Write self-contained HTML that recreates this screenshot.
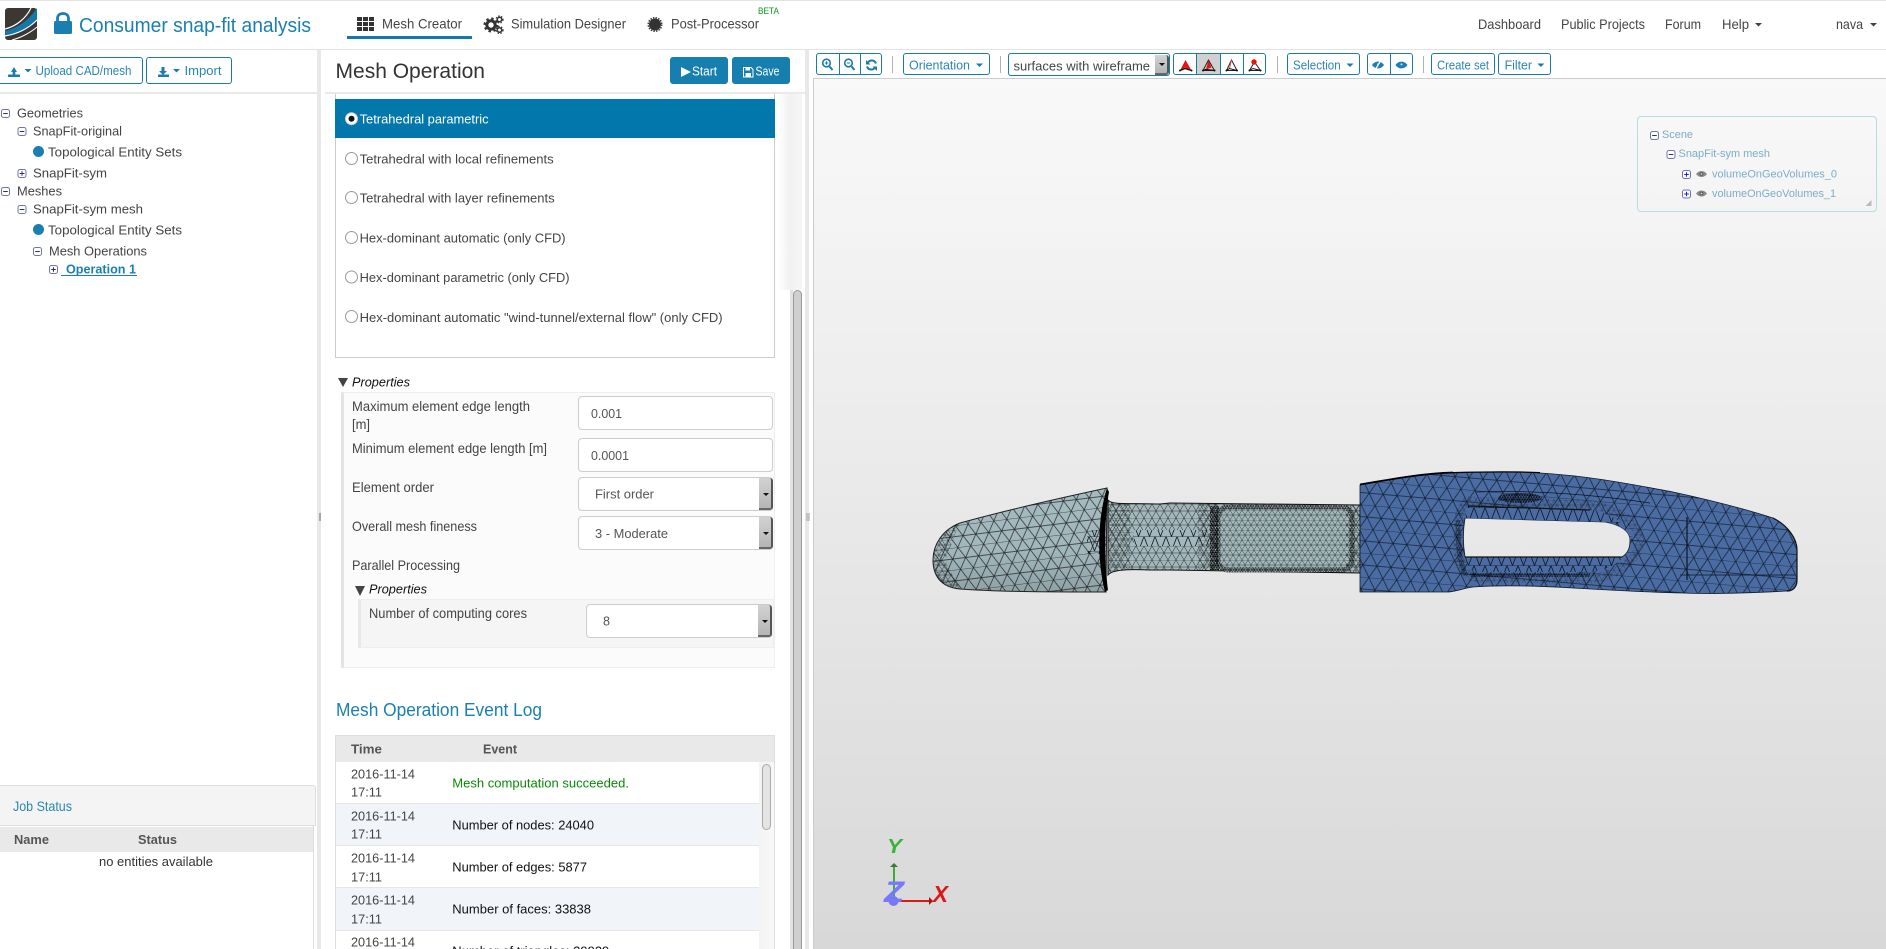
<!DOCTYPE html>
<html lang="en"><head><meta charset="utf-8"><title>Consumer snap-fit analysis</title>
<style>
html,body{margin:0;padding:0;width:1886px;height:949px;overflow:hidden;background:#fff;font-family:"Liberation Sans",sans-serif}
.a{position:absolute;box-sizing:border-box}
.b{position:absolute;box-sizing:border-box;border:1px solid #1a7bab;border-radius:3px;background:#fff}
.i{position:absolute;box-sizing:border-box;border:1px solid #ccc;border-radius:4px;background:#fff}
.ar{position:absolute;box-sizing:border-box;background:linear-gradient(#d2d2d2,#b5b5b5);border-right:2px solid #555;border-bottom:2px solid #666;border-radius:0 3px 3px 0}
svg{position:absolute;left:0;top:0}
text{font-family:"Liberation Sans",sans-serif;white-space:pre}
.t13{font-size:13px;fill:#444}
.n{font-size:14px;fill:#444}
.bl{font-size:13px;fill:#2a86b6}
.w{font-size:13px;fill:#fff}
.sc{font-size:11px;fill:#7badc9}
.rd{font-size:13px;fill:#444}
.lb{font-size:14px;fill:#444}
.ev{font-size:13px;fill:#111}
.th{font-size:13px;font-weight:bold;fill:#555}
</style></head><body>
<!-- navbar -->
<div class="a" style="left:0;top:0;width:1886px;height:50px;background:#fff;border-top:1px solid #e3e3e3;border-bottom:1px solid #e4e4e4"></div>
<div class="a" style="left:347px;top:36px;width:125px;height:3px;background:#1479a8"></div>
<!-- left -->
<div class="a" style="left:0;top:92px;width:317px;height:2px;background:#e8e8e8"></div>
<div class="a" style="left:317px;top:50px;width:4px;height:899px;background:#e8e8e8"></div>
<div class="b" style="left:-4px;top:57px;width:147px;height:27px"></div>
<div class="b" style="left:146px;top:57px;width:86px;height:27px"></div>
<div class="a" style="left:0;top:785px;width:316px;height:41px;background:#f4f4f4;border-top:1px solid #ddd;border-right:1px solid #ddd;border-bottom:1px solid #ddd;border-radius:0 3px 0 0"></div>
<div class="a" style="left:0;top:827px;width:313px;height:25px;background:#e9e9e9"></div>
<div class="a" style="left:313px;top:826px;width:1px;height:123px;background:#ddd"></div>
<!-- middle -->
<div class="a" style="left:325px;top:92px;width:480px;height:2px;background:#eaeaea"></div>
<div class="b" style="left:670px;top:57px;width:58px;height:27px;background:#177fb0;border-color:#177fb0"></div>
<div class="b" style="left:732px;top:57px;width:58px;height:27px;background:#177fb0;border-color:#177fb0"></div>
<div class="a" style="left:335px;top:94px;width:440px;height:264px;border:1px solid #ccc;border-top:0;background:#fff"></div>
<div class="a" style="left:335px;top:99px;width:440px;height:39px;background:#0277ab"></div>
<div class="a" style="left:778px;top:94px;width:24px;height:196px;background:linear-gradient(90deg,#fff,#f1f1f1 50%,#f6f6f6)"></div>
<div class="a" style="left:790px;top:290px;width:3px;height:659px;background:#e2e2e2"></div>
<div class="a" style="left:793px;top:290px;width:9px;height:659px;background:#cfcfcf;border:1px solid #999;border-bottom:0;border-radius:5px 5px 0 0"></div>
<div class="a" style="left:805px;top:50px;width:4px;height:899px;background:#e8e8e8"></div>
<!-- properties -->
<div class="a" style="left:341px;top:392px;width:434px;height:276px;background:#fbfbfb;border:1px solid #eee;border-left:3px solid #e4e4e4"></div>
<div class="i" style="left:578px;top:396px;width:195px;height:34px"></div>
<div class="i" style="left:578px;top:438px;width:195px;height:34px"></div>
<div class="i" style="left:578px;top:477px;width:195px;height:34px"></div><div class="ar" style="left:759px;top:478px;width:14px;height:32px"></div>
<div class="i" style="left:578px;top:516px;width:195px;height:34px"></div><div class="ar" style="left:759px;top:517px;width:14px;height:32px"></div>
<div class="a" style="left:358px;top:599px;width:416px;height:49px;background:#f5f5f5;border:1px solid #eee;border-left:3px solid #e8e8e8"></div>
<div class="i" style="left:586px;top:604px;width:186px;height:34px"></div><div class="ar" style="left:758px;top:605px;width:14px;height:32px"></div>
<!-- table -->
<div class="a" style="left:335px;top:735px;width:440px;height:214px;border:1px solid #ddd;border-bottom:0;background:#fff"></div>
<div class="a" style="left:336px;top:736px;width:438px;height:26px;background:#e9e9e9"></div>
<div class="a" style="left:336px;top:803px;width:423px;height:43px;background:#f1f5fa;border-top:1px solid #e6e6e6;border-bottom:1px solid #e6e6e6"></div>
<div class="a" style="left:336px;top:887px;width:423px;height:44px;background:#f1f5fa;border-top:1px solid #e6e6e6;border-bottom:1px solid #e6e6e6"></div>
<div class="a" style="left:759px;top:762px;width:15px;height:187px;background:linear-gradient(90deg,#f3f3f3,#f8f8f8)"></div>
<div class="a" style="left:762px;top:764px;width:9px;height:66px;background:#e4e4e4;border:1px solid #aaa;border-radius:5px"></div>
<!-- canvas -->
<div class="a" style="left:813px;top:78px;width:1073px;height:871px;background:linear-gradient(#f9f9f9,#d8d8d8);border-left:1px solid #ccc;border-top:1px solid #ccc"></div>
<div class="a" style="left:1637px;top:116px;width:240px;height:96px;border:1px solid #b7dbe8;border-radius:4px"></div>
<!-- toolbar -->
<div class="b" style="left:816px;top:53px;width:66px;height:22px"></div>
<div class="a" style="left:839px;top:53px;width:1px;height:22px;background:#1a7bab"></div>
<div class="a" style="left:860px;top:53px;width:1px;height:22px;background:#1a7bab"></div>
<div class="a" style="left:892px;top:56px;width:1px;height:17px;background:#b9b2b2"></div>
<div class="b" style="left:903px;top:53px;width:87px;height:22px"></div>
<div class="a" style="left:1000px;top:56px;width:1px;height:17px;background:#b9b2b2"></div>
<div class="b" style="left:1008px;top:53px;width:162px;height:23px"></div>
<div class="ar" style="left:1155px;top:55px;width:14px;height:20px"></div>
<div class="b" style="left:1173px;top:53px;width:93px;height:22px"></div>
<div class="a" style="left:1197px;top:54px;width:23px;height:20px;background:#d0d0d0"></div>
<div class="a" style="left:1196px;top:53px;width:1px;height:22px;background:#1a7bab"></div>
<div class="a" style="left:1220px;top:53px;width:1px;height:22px;background:#1a7bab"></div>
<div class="a" style="left:1243px;top:53px;width:1px;height:22px;background:#1a7bab"></div>
<div class="a" style="left:1277px;top:56px;width:1px;height:17px;background:#b9b2b2"></div>
<div class="b" style="left:1287px;top:53px;width:73px;height:22px"></div>
<div class="b" style="left:1367px;top:53px;width:46px;height:22px"></div>
<div class="a" style="left:1390px;top:53px;width:1px;height:22px;background:#1a7bab"></div>
<div class="a" style="left:1423px;top:56px;width:1px;height:17px;background:#b9b2b2"></div>
<div class="b" style="left:1431px;top:53px;width:64px;height:22px"></div>
<div class="b" style="left:1498px;top:53px;width:53px;height:22px"></div>

<svg width="1886" height="949" viewBox="0 0 1886 949" xmlns="http://www.w3.org/2000/svg">
<defs>
<g id="mi"><rect x=".5" y=".5" width="8" height="8" rx="2" fill="#fff" stroke="#6f74b8"/><path d="M2.2 4.5H6.8" stroke="#334" /></g>
<g id="pl"><rect x=".5" y=".5" width="8" height="8" rx="2" fill="#fff" stroke="#6f74b8"/><path d="M2.2 4.5H6.8M4.5 2.2V6.8" stroke="#22c"/></g>
<g id="eye"><path d="M0 4C3 0 8 0 11 4C8 8 3 8 0 4Z" fill="#8a8a8a"/><circle cx="5.5" cy="4" r="2" fill="#666"/><circle cx="5.5" cy="4" r=".8" fill="#ddd"/></g>
<g id="eb"><path d="M0 4C3 -.5 9 -.5 12 4C9 8.500 3 8.500 0 4Z" fill="#1a7fb0"/><circle cx="6" cy="3.400" r="1" fill="#cfe6f2"/></g>
<path id="car" d="M0 0H7L3.5 3.5Z"/>
<pattern id="t1" patternUnits="userSpaceOnUse" width="13" height="22" patternTransform="rotate(-7)"><path d="M0 0H13M0 11H13M0 0L6.500 11L13 0M0 22L6.500 11L13 22" fill="none" stroke="#111" stroke-width=".7" opacity=".85"/></pattern>
<pattern id="t2" patternUnits="userSpaceOnUse" width="8" height="14"><path d="M0 0H8M0 7H8M0 0L4 7L8 0M0 14L4 7L8 14" fill="none" stroke="#111" stroke-width=".55" opacity=".8"/></pattern>
<pattern id="t3" patternUnits="userSpaceOnUse" width="6" height="10"><path d="M0 0H6M0 5H6M0 0L3 5L6 0M0 10L3 5L6 10" fill="none" stroke="#111" stroke-width=".5" opacity=".75"/></pattern>
<pattern id="t4" patternUnits="userSpaceOnUse" width="2.6" height="4.4"><path d="M0 0H2.6M0 2.2H2.6M0 0L1.3 2.2L2.6 0M0 4.4L1.3 2.2L2.6 4.4" fill="none" stroke="#000" stroke-width=".5"/></pattern>
<pattern id="b1" patternUnits="userSpaceOnUse" width="14" height="24" patternTransform="rotate(5)"><path d="M0 0H14M0 12H14M0 0L7 12L14 0M0 24L7 12L14 24" fill="none" stroke="#0c1522" stroke-width=".75" opacity=".85"/></pattern>
<pattern id="b2" patternUnits="userSpaceOnUse" width="11" height="14.5"><path d="M0 0L5.5 14.5L11 0M0 0H11" fill="none" stroke="#0c1522" stroke-width=".8"/></pattern>
<linearGradient id="gc" x1="0" y1="0" x2="0" y2="1"><stop offset="0" stop-color="#a5bbc0"/><stop offset=".6" stop-color="#a2b7bc"/><stop offset="1" stop-color="#8fa3a7"/></linearGradient>
</defs>

<!-- logo -->
<rect x="5" y="8" width="32" height="32" rx="3" fill="#3c3733"/>
<path d="M5 31C18 28 29 20 37 8L37 20C28 29 17 34 5 36Z" fill="#1379ab"/>
<path d="M5 29C17 26 26 18 31 8" fill="none" stroke="#fff" stroke-width="1.2"/>
<path d="M5 36C17 34 28 29 37 20" fill="none" stroke="#fff" stroke-width="1.2"/>
<path d="M12 40C20 38 30 33 37 27" fill="none" stroke="#fff" stroke-width="1"/>
<!-- lock -->
<rect x="54" y="21" width="18" height="13" rx="1.5" fill="#1a7fb0"/>
<path d="M57.5 22V18.5C57.5 15 60 13.5 63 13.5C66 13.5 68.500 15 68.500 18.500V22" fill="none" stroke="#1a7fb0" stroke-width="2.800"/>
<text x="79" y="32" font-size="20" fill="#1a80b0" textLength="232" lengthAdjust="spacingAndGlyphs">Consumer snap-fit analysis</text>
<!-- nav icons -->
<g fill="#333"><rect x="357" y="17" width="5" height="4"/><rect x="363" y="17" width="5" height="4"/><rect x="369" y="17" width="5" height="4"/><rect x="357" y="22" width="5" height="4"/><rect x="363" y="22" width="5" height="4"/><rect x="369" y="22" width="5" height="4"/><rect x="357" y="27" width="5" height="4"/><rect x="363" y="27" width="5" height="4"/><rect x="369" y="27" width="5" height="4"/></g>
<text x="382" y="28.500" class="n" textLength="80" lengthAdjust="spacingAndGlyphs">Mesh Creator</text>
<g fill="none" stroke="#333"><circle cx="491" cy="25" r="4.200" stroke-width="3"/><circle cx="491" cy="25" r="6.500" stroke-width="2" stroke-dasharray="2.500 2.600"/><circle cx="499.500" cy="19.500" r="2.200" stroke-width="1.500"/><circle cx="499.500" cy="19.500" r="3.500" stroke-width="1.200" stroke-dasharray="1.500 1.500"/><circle cx="499.500" cy="30" r="2.200" stroke-width="1.500"/><circle cx="499.500" cy="30" r="3.500" stroke-width="1.200" stroke-dasharray="1.500 1.500"/></g>
<text x="511" y="28.500" class="n" textLength="115" lengthAdjust="spacingAndGlyphs">Simulation Designer</text>
<circle cx="655" cy="24.500" r="6" fill="#333"/><circle cx="655" cy="24.500" r="6.800" fill="none" stroke="#333" stroke-width="1.400" stroke-dasharray="1.500 1.200"/>
<text x="671" y="28.500" class="n" textLength="88" lengthAdjust="spacingAndGlyphs">Post-Processor</text>
<text x="758" y="14" font-size="9" fill="#0a9a20" textLength="21" lengthAdjust="spacingAndGlyphs">BETA</text>
<text x="1478" y="29" class="n" textLength="63" lengthAdjust="spacingAndGlyphs">Dashboard</text>
<text x="1561" y="29" class="n" textLength="84" lengthAdjust="spacingAndGlyphs">Public Projects</text>
<text x="1665" y="29" class="n" textLength="36" lengthAdjust="spacingAndGlyphs">Forum</text>
<text x="1722" y="29" class="n" textLength="27" lengthAdjust="spacingAndGlyphs">Help</text>
<use href="#car" x="1755" y="23" fill="#444"/>
<text x="1836" y="29" class="n" textLength="27" lengthAdjust="spacingAndGlyphs">nava</text>
<use href="#car" x="1870" y="23" fill="#444"/>

<!-- left buttons -->
<g fill="#1a7fb0"><path d="M11 72L14 67L17 72H15.300V75H12.700V72Z"/><rect x="8" y="74.500" width="12" height="2.500" rx=".5"/><use href="#car" x="24.500" y="69"/>
<path d="M161.500 67H164.500V71H167L163 75L159 71H161.500Z"/><rect x="158" y="74.500" width="11" height="2.500" rx=".5"/><use href="#car" x="173" y="69"/></g>
<text x="35.500" y="75" class="bl" textLength="96" lengthAdjust="spacingAndGlyphs">Upload CAD/mesh</text>
<text x="184.500" y="75" class="bl" textLength="37" lengthAdjust="spacingAndGlyphs">Import</text>
<!-- tree -->
<use href="#mi" x="1" y="109"/><text x="17" y="117.500" class="t13" textLength="66" lengthAdjust="spacingAndGlyphs">Geometries</text>
<use href="#mi" x="17.500" y="127"/><text x="33" y="135.500" class="t13" textLength="89" lengthAdjust="spacingAndGlyphs">SnapFit-original</text>
<circle cx="38.500" cy="151.500" r="5.500" fill="#1a7fb0"/><text x="48" y="156.500" class="t13" textLength="134" lengthAdjust="spacingAndGlyphs">Topological Entity Sets</text>
<use href="#pl" x="17.500" y="169"/><text x="33" y="177.500" class="t13" textLength="74" lengthAdjust="spacingAndGlyphs">SnapFit-sym</text>
<use href="#mi" x="1" y="187"/><text x="17" y="195.500" class="t13" textLength="45" lengthAdjust="spacingAndGlyphs">Meshes</text>
<use href="#mi" x="17.500" y="205"/><text x="33" y="213.500" class="t13" textLength="110" lengthAdjust="spacingAndGlyphs">SnapFit-sym mesh</text>
<circle cx="38.500" cy="229.500" r="5.500" fill="#1a7fb0"/><text x="48" y="234.500" class="t13" textLength="134" lengthAdjust="spacingAndGlyphs">Topological Entity Sets</text>
<use href="#mi" x="33" y="247"/><text x="49" y="255.500" class="t13" textLength="98" lengthAdjust="spacingAndGlyphs">Mesh Operations</text>
<use href="#pl" x="49" y="265"/><text x="66" y="273.500" font-size="13" font-weight="bold" fill="#1a80b0" textLength="70" lengthAdjust="spacingAndGlyphs">Operation 1</text>
<rect x="61" y="275" width="76" height="1" fill="#1a80b0"/>
<!-- job status -->
<text x="13" y="811" font-size="14" fill="#2a86b6" textLength="59" lengthAdjust="spacingAndGlyphs">Job Status</text>
<text x="14" y="844" class="th" textLength="35" lengthAdjust="spacingAndGlyphs">Name</text>
<text x="138" y="844" class="th" textLength="39" lengthAdjust="spacingAndGlyphs">Status</text>
<text x="99" y="866" font-size="13" fill="#333" textLength="114" lengthAdjust="spacingAndGlyphs">no entities available</text>
<path d="M320 513V521" stroke="#666"/>

<!-- middle header -->
<text x="335.500" y="78" font-size="21" fill="#333" textLength="149.500" lengthAdjust="spacingAndGlyphs">Mesh Operation</text>
<path d="M681 67L691 72L681 77Z" fill="#fff"/>
<text x="692" y="75.500" class="w" textLength="25" lengthAdjust="spacingAndGlyphs">Start</text>
<path d="M743.500 67.500H751L753 69.500V77H743.500Z" fill="none" stroke="#fff"/><rect x="745.500" y="67.500" width="4.500" height="3" fill="#fff"/><rect x="745.500" y="73" width="5.500" height="4" fill="#fff"/>
<text x="755.500" y="75.500" class="w" textLength="24" lengthAdjust="spacingAndGlyphs">Save</text>
<!-- radios -->
<g fill="#fff" stroke="#999"><circle cx="351.500" cy="118.700" r="6" stroke="#ccc"/><circle cx="351.500" cy="158.500" r="6"/><circle cx="351.500" cy="197.500" r="6"/><circle cx="351.500" cy="237.500" r="6"/><circle cx="351.500" cy="277" r="6"/><circle cx="351.500" cy="316.500" r="6"/></g>
<circle cx="351.500" cy="118.700" r="3" fill="#111"/>
<text x="359.600" y="123.500" font-size="13" fill="#fff" textLength="129" lengthAdjust="spacingAndGlyphs">Tetrahedral parametric</text>
<text x="359.600" y="163.500" class="rd" textLength="194" lengthAdjust="spacingAndGlyphs">Tetrahedral with local refinements</text>
<text x="359.600" y="202.500" class="rd" textLength="195" lengthAdjust="spacingAndGlyphs">Tetrahedral with layer refinements</text>
<text x="359.600" y="242.500" class="rd" textLength="206" lengthAdjust="spacingAndGlyphs">Hex-dominant automatic (only CFD)</text>
<text x="359.600" y="282" class="rd" textLength="210" lengthAdjust="spacingAndGlyphs">Hex-dominant parametric (only CFD)</text>
<text x="359.600" y="322" class="rd" textLength="363" lengthAdjust="spacingAndGlyphs">Hex-dominant automatic "wind-tunnel/external flow" (only CFD)</text>
<!-- properties -->
<path d="M338 378H348L343 387Z" fill="#444"/>
<text x="352" y="386.500" font-size="13" font-style="italic" fill="#111" textLength="58" lengthAdjust="spacingAndGlyphs">Properties</text>
<text x="352" y="411" class="lb" textLength="178" lengthAdjust="spacingAndGlyphs">Maximum element edge length</text>
<text x="352" y="429" class="lb" textLength="18" lengthAdjust="spacingAndGlyphs">[m]</text>
<text x="352" y="453" class="lb" textLength="195" lengthAdjust="spacingAndGlyphs">Minimum element edge length [m]</text>
<text x="352" y="492" class="lb" textLength="82" lengthAdjust="spacingAndGlyphs">Element order</text>
<text x="352" y="531" class="lb" textLength="125" lengthAdjust="spacingAndGlyphs">Overall mesh fineness</text>
<text x="352" y="570" class="lb" textLength="108" lengthAdjust="spacingAndGlyphs">Parallel Processing</text>
<text x="591" y="418" font-size="13" fill="#555" textLength="31" lengthAdjust="spacingAndGlyphs">0.001</text>
<text x="591" y="460" font-size="13" fill="#555" textLength="38" lengthAdjust="spacingAndGlyphs">0.0001</text>
<text x="595" y="498.500" font-size="13" fill="#555" textLength="59" lengthAdjust="spacingAndGlyphs">First order</text>
<text x="595" y="538" font-size="13" fill="#555" textLength="73" lengthAdjust="spacingAndGlyphs">3 - Moderate</text>
<text x="603" y="625.500" font-size="13" fill="#555" textLength="7" lengthAdjust="spacingAndGlyphs">8</text>
<path d="M763 493H769L766 496ZM763 532H769L766 535ZM762 620H768L765 623Z" fill="#111"/>
<path d="M355 586H365L360 596Z" fill="#444"/>
<text x="369" y="593.500" font-size="13" font-style="italic" fill="#111" textLength="58" lengthAdjust="spacingAndGlyphs">Properties</text>
<text x="369" y="618" class="lb" textLength="158" lengthAdjust="spacingAndGlyphs">Number of computing cores</text>
<path d="M807 513V521M809 513V521" stroke="#888" stroke-width=".8"/>
<!-- log -->
<text x="336" y="716" font-size="18" fill="#1a80b0" textLength="206" lengthAdjust="spacingAndGlyphs">Mesh Operation Event Log</text>
<text x="351" y="753.500" class="th" textLength="31" lengthAdjust="spacingAndGlyphs">Time</text>
<text x="483" y="753.500" class="th" textLength="34" lengthAdjust="spacingAndGlyphs">Event</text>
<g class="t13">
<text x="351" y="778.500" class="t13" textLength="64" lengthAdjust="spacingAndGlyphs">2016-11-14</text><text x="351" y="796.500" class="t13" textLength="31" lengthAdjust="spacingAndGlyphs">17:11</text>
<text x="351" y="820.500" class="t13" textLength="64" lengthAdjust="spacingAndGlyphs">2016-11-14</text><text x="351" y="838.500" class="t13" textLength="31" lengthAdjust="spacingAndGlyphs">17:11</text>
<text x="351" y="862.500" class="t13" textLength="64" lengthAdjust="spacingAndGlyphs">2016-11-14</text><text x="351" y="881.500" class="t13" textLength="31" lengthAdjust="spacingAndGlyphs">17:11</text>
<text x="351" y="904.500" class="t13" textLength="64" lengthAdjust="spacingAndGlyphs">2016-11-14</text><text x="351" y="923.500" class="t13" textLength="31" lengthAdjust="spacingAndGlyphs">17:11</text>
<text x="351" y="946.500" class="t13" textLength="64" lengthAdjust="spacingAndGlyphs">2016-11-14</text>
</g>
<text x="452.300" y="787.500" font-size="13" fill="#0a8a0a" textLength="176.700" lengthAdjust="spacingAndGlyphs">Mesh computation succeeded.</text>
<text x="452.300" y="829.500" class="ev" textLength="141.700" lengthAdjust="spacingAndGlyphs">Number of nodes: 24040</text>
<text x="452.300" y="871.500" class="ev" textLength="134.700" lengthAdjust="spacingAndGlyphs">Number of edges: 5877</text>
<text x="452.300" y="913.500" class="ev" textLength="138.700" lengthAdjust="spacingAndGlyphs">Number of faces: 33838</text>
<text x="452.300" y="955.500" class="ev" textLength="157" lengthAdjust="spacingAndGlyphs">Number of triangles: 39939</text>

<!-- toolbar icons -->
<g fill="none" stroke="#1a7bab"><circle cx="826.500" cy="63" r="3.800" stroke-width="1.600"/><path d="M829.500 66.500L832.500 70" stroke-width="2"/><path d="M824.800 63H828.200M826.500 61.300V64.700" stroke-width="1"/>
<circle cx="848.500" cy="63" r="3.800" stroke-width="1.600"/><path d="M851.500 66.500L854.500 70" stroke-width="2"/><path d="M846.800 63H850.200" stroke-width="1"/>
<path d="M876 63.500A4.500 4.500 0 0 0 868 62.500M867 66.500A4.500 4.500 0 0 0 875 67.500" stroke-width="2"/></g>
<path d="M866 60V64.500H870.500ZM877 71V66.500H872.500Z" fill="#1a7bab"/>
<text x="909" y="69.500" class="bl" textLength="61" lengthAdjust="spacingAndGlyphs">Orientation</text><use href="#car" x="976" y="63.500" fill="#1a7bab"/>
<text x="1013.500" y="70.500" font-size="13" fill="#444" textLength="136.500" lengthAdjust="spacingAndGlyphs">surfaces with wireframe</text>
<path d="M1159 63H1165L1162 66Z" fill="#111"/>
<!-- tetrahedra -->
<path d="M1185.500 60L1180 70.500L1185 67.500L1191.500 70.500Z" fill="#ee1010"/><path d="M1180 70.500L1185 68.500L1191.500 70.500" fill="none" stroke="#111" stroke-width="1.300"/>
<path d="M1208.500 60L1203 70.500H1214.500Z" fill="#d0d0d0" stroke="#222"/><path d="M1208.500 60L1206 69.500L1211.500 67.500Z" fill="#e01515"/><path d="M1203 70.500L1206 69.500L1214.500 70.500" fill="none" stroke="#111" stroke-width="1.200"/>
<path d="M1231.500 60L1226.500 70.500H1237Z" fill="#fff" stroke="#222"/><path d="M1231.500 60L1229.500 68.500" stroke="#d55" fill="none"/><path d="M1226.500 70.500L1229.500 68.500L1237 70.500" fill="none" stroke="#111"/>
<path d="M1254.500 62L1249.500 70.500H1260.500Z" fill="#fff" stroke="#222"/><path d="M1249.500 70.500L1253 68.500L1260.500 70.500" fill="none" stroke="#111"/>
<circle cx="1254" cy="62" r="2.700" fill="#ee1010"/>
<g fill="#111"><circle cx="1180" cy="70.500" r="1"/><circle cx="1191.500" cy="70.500" r="1"/><circle cx="1203" cy="70.500" r="1"/><circle cx="1214.500" cy="70.500" r="1"/><circle cx="1226.500" cy="70.500" r="1"/><circle cx="1237" cy="70.500" r="1"/><circle cx="1249.500" cy="70.500" r="1"/><circle cx="1260.500" cy="70.500" r="1"/></g>
<text x="1293" y="69.500" class="bl" textLength="47.700" lengthAdjust="spacingAndGlyphs">Selection</text><use href="#car" x="1346.500" y="63.500" fill="#1a7bab"/>
<use href="#eb" x="1372" y="61"/><path d="M1375.500 69.500L1381 60" stroke="#fff" stroke-width="1.300"/>
<use href="#eb" x="1395.500" y="61"/>
<text x="1437" y="69.500" class="bl" textLength="52" lengthAdjust="spacingAndGlyphs">Create set</text>
<text x="1504.600" y="69.500" class="bl" textLength="27.400" lengthAdjust="spacingAndGlyphs">Filter</text><use href="#car" x="1537.400" y="63.500" fill="#1a7bab"/>

<!-- scene tree -->
<use href="#mi" x="1650" y="131"/><text x="1662" y="138" class="sc" textLength="31" lengthAdjust="spacingAndGlyphs">Scene</text>
<use href="#mi" x="1666.500" y="150"/><text x="1678.500" y="157" class="sc" textLength="91.500" lengthAdjust="spacingAndGlyphs">SnapFit-sym mesh</text>
<use href="#pl" x="1682" y="170"/><use href="#eye" x="1696" y="170"/><text x="1712" y="177.500" class="sc" textLength="125" lengthAdjust="spacingAndGlyphs">volumeOnGeoVolumes_0</text>
<use href="#pl" x="1682" y="189.500"/><use href="#eye" x="1696" y="189.500"/><text x="1712" y="197" class="sc" textLength="124" lengthAdjust="spacingAndGlyphs">volumeOnGeoVolumes_1</text>
<path d="M1871.500 200V206H1865.500Z" fill="#bbb"/>

<!-- model: neck -->
<path d="M1108 500C1112 505 1125 503 1160 504L1170 503L1360 505V573L1170 570H1150C1125 569 1112 570 1108 575Z" fill="#a3b8bc"/>
<path d="M1108 500C1112 505 1125 503 1160 504L1170 503L1360 505V573L1170 570H1150C1125 569 1112 570 1108 575Z" fill="url(#t2)" stroke="#111" stroke-width="1"/>
<path d="M1108 500C1112 505 1120 503 1130 504L1130 570C1120 569 1112 570 1108 575Z" fill="url(#t3)"/>
<rect x="1134" y="530" width="76" height="16" fill="#a3b8bc"/><rect x="1134" y="530" width="76" height="16" fill="url(#b2)"/>
<rect x="1198" y="504" width="20" height="66" fill="url(#t3)"/>
<rect x="1210" y="506" width="9" height="64" fill="url(#t4)"/>
<rect x="1218" y="505" width="134" height="67" rx="10" fill="#a3b8bc"/>
<rect x="1218" y="505" width="134" height="67" rx="10" fill="url(#t3)"/>
<rect x="1218" y="507" width="134" height="63" rx="10" fill="none" stroke="url(#t4)" stroke-width="5" opacity=".8"/>
<rect x="1346" y="505" width="14" height="68" fill="url(#t3)"/>
<!-- model: cap -->
<path d="M1107 488C1060 498 1000 512 960 523C942 530 933 545 933 560C933 575 940 587 960 589C1000 592 1060 592 1106 592Z" fill="url(#gc)"/>
<path d="M1107 488C1060 498 1000 512 960 523C942 530 933 545 933 560C933 575 940 587 960 589C1000 592 1060 592 1106 592Z" fill="url(#t1)" stroke="#222" stroke-width="1"/>
<path d="M960 523C942 530 933 545 933 560C933 575 940 587 960 589L945 560Z" fill="url(#t3)"/>
<path d="M1087 530H1100V554H1087Z" fill="url(#b2)"/>
<path d="M1107 488L1109 492C1104 520 1104 560 1108 590L1105 592C1097 560 1097 520 1107 488Z" fill="#000"/>
<!-- model: blue body -->
<path fill-rule="evenodd" d="M1360 485C1390 480 1420 474 1453 473C1490 472 1520 472 1540 473C1590 476 1630 484 1673 492C1710 500 1745 509 1773 518C1787 525 1797 538 1797 550V580C1797 588 1792 591 1787 591C1750 593 1710 594 1683 593C1640 592 1610 590 1573 588C1540 586 1500 585 1473 587C1460 589 1455 592 1447 592H1360ZM1465 518L1605 522C1622 525 1630 532 1630 540C1630 548 1628 553 1622 557H1465C1463 545 1463 530 1465 518Z" fill="#4a6ca3"/>
<path fill-rule="evenodd" d="M1360 485C1390 480 1420 474 1453 473C1490 472 1520 472 1540 473C1590 476 1630 484 1673 492C1710 500 1745 509 1773 518C1787 525 1797 538 1797 550V580C1797 588 1792 591 1787 591C1750 593 1710 594 1683 593C1640 592 1610 590 1573 588C1540 586 1500 585 1473 587C1460 589 1455 592 1447 592H1360ZM1465 518L1605 522C1622 525 1630 532 1630 540C1630 548 1628 553 1622 557H1465C1463 545 1463 530 1465 518Z" fill="url(#b1)" stroke="#10192a" stroke-width=".8"/>
<path d="M1468 501L1590 505C1620 509 1640 525 1640 540C1640 562 1612 577 1590 579L1475 578C1462 575 1458 560 1458 540C1458 520 1460 505 1468 501Z" fill="none" stroke="url(#t3)" stroke-width="9" opacity=".7"/>
<path d="M1458 520C1458 540 1458 560 1466 575" fill="none" stroke="url(#t4)" stroke-width="5" opacity=".6"/>
<path d="M1470 575H1590" fill="none" stroke="url(#t4)" stroke-width="4" opacity=".7"/>
<path d="M1468 506L1590 510C1612 513 1628 525 1632 538L1630 540C1630 532 1622 525 1605 522L1465 518Z" fill="#4a6ca3"/>
<path d="M1468 506L1590 510C1612 513 1628 525 1632 538L1630 540C1630 532 1622 525 1605 522L1465 518Z" fill="url(#b2)"/>
<path d="M1465 557H1622C1618 566 1600 571 1590 572L1478 572C1470 570 1467 565 1465 557Z" fill="#4a6ca3"/>
<path d="M1465 557H1622C1618 566 1600 571 1590 572L1478 572C1470 570 1467 565 1465 557Z" fill="url(#b2)"/>
<path d="M1465 557H1622M1468 506L1590 510" stroke="#111" stroke-width="1.200" fill="none"/>
<ellipse cx="1520" cy="498" rx="22" ry="5" fill="url(#t4)"/>
<path d="M1475 492C1530 490 1590 494 1650 503" fill="none" stroke="#0c1522" stroke-width=".8"/>
<path d="M1687 517V580" stroke="#0c1522" stroke-width="1.200"/>
<path d="M1680 575H1795" stroke="#0c1522" stroke-width=".8"/>
<path d="M1360 484.500C1390 479.500 1420 473.500 1453 472.500" fill="none" stroke="#000" stroke-width="1.800"/>
<path d="M1453 472.500C1490 471.500 1520 471.500 1540 472.500" fill="none" stroke="#000" stroke-width=".9"/>
<path d="M1773 518C1787 525 1797 538 1797 550V580C1797 588 1792 591 1787 591" fill="none" stroke="#111" stroke-width="1.200"/>

<!-- axes -->
<path d="M894 900V866" stroke="#3cab3c" stroke-width="2"/><path d="M890 867L894 863L898 867Z" fill="#3a7a3a"/>
<path d="M893 901H930" stroke="#e01515" stroke-width="2"/><path d="M929 897V905L933 901Z" fill="#a11"/>
<circle cx="893.500" cy="901" r="5" fill="#7777ee"/>
<text x="887" y="853" font-size="20" font-weight="bold" font-style="italic" fill="#3cb33c" textLength="15" lengthAdjust="spacingAndGlyphs">Y</text>
<text x="884" y="902" font-size="30" font-weight="bold" font-style="italic" fill="#7777ff" textLength="20" lengthAdjust="spacingAndGlyphs">Z</text>
<text x="933" y="902" font-size="23" font-weight="bold" font-style="italic" fill="#e01515" textLength="15" lengthAdjust="spacingAndGlyphs">X</text>
</svg>
</body></html>
